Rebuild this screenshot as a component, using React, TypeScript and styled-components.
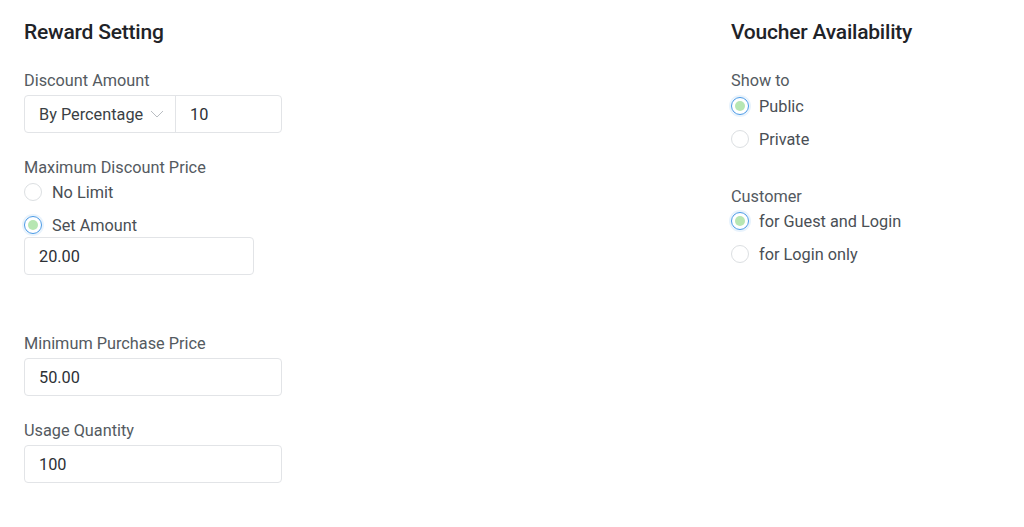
import React from 'react';
import styled, { createGlobalStyle } from 'styled-components';

const GlobalStyle = createGlobalStyle`
  html, body {
    margin: 0;
    padding: 0;
    background: #ffffff;
  }
  body {
    font-family: Roboto, "Liberation Sans", Arial, sans-serif;
  }
`;

const Page = styled.div`
  width: 1024px;
  height: 527px;
  box-sizing: border-box;
  padding: 20px 24px 0;
  display: grid;
  grid-template-columns: 1fr 269px;
  background: #fff;
`;

const Column = styled.div`
  display: flex;
  flex-direction: column;
`;

const Heading = styled.h2`
  margin: 0 0 27px 0;
  font-size: 21px;
  line-height: 24px;
  font-weight: 500;
  color: #1f2328;
  letter-spacing: -0.01em;
`;

const Field = styled.div<{ $gap?: number }>`
  display: flex;
  flex-direction: column;
  margin-bottom: ${(p) => p.$gap ?? 25}px;
`;

const Label = styled.div`
  font-size: 16.3px;
  line-height: 20px;
  color: #545a61;
  margin-bottom: 4px;
`;

const InputGroup = styled.div`
  display: flex;
  width: 258px;
  height: 38px;
  box-sizing: border-box;
  border: 1px solid #e2e4e7;
  border-radius: 4px;
  background: #fff;
`;

const SelectBox = styled.div`
  width: 151px;
  display: flex;
  align-items: center;
  justify-content: space-between;
  box-sizing: border-box;
  padding: 0 11px 0 14px;
  border-right: 1px solid #e2e4e7;
  font-size: 16.3px;
  color: #3a3f45;
`;

const GroupInput = styled.div`
  flex: 1;
  display: flex;
  align-items: center;
  padding-left: 14px;
  font-size: 16.3px;
  color: #2d3136;
`;

const TextInput = styled.div<{ $width?: number }>`
  width: ${(p) => p.$width ?? 258}px;
  height: 38px;
  box-sizing: border-box;
  border: 1px solid #e2e4e7;
  border-radius: 4px;
  display: flex;
  align-items: center;
  padding-left: 14px;
  font-size: 16.3px;
  color: #2d3136;
`;

const RadioList = styled.div<{ $offset?: number }>`
  display: flex;
  flex-direction: column;
  gap: 9px;
  margin-top: ${(p) => p.$offset ?? -1}px;
`;

const RadioRow = styled.div`
  display: flex;
  align-items: center;
  gap: 10px;
  height: 24px;
  font-size: 16.3px;
  color: #4a4f55;
`;

const RadioCircle = styled.span<{ $checked?: boolean }>`
  width: 18px;
  height: 18px;
  box-sizing: border-box;
  border-radius: 50%;
  border: ${(p) => (p.$checked ? '1.5px solid #4a9ae6' : '1px solid #dcdfe2')};
  box-shadow: ${(p) => (p.$checked ? '0 0 0 2px rgba(74, 154, 230, 0.12)' : 'none')};
  display: flex;
  align-items: center;
  justify-content: center;
  flex-shrink: 0;

  &::after {
    content: '';
    width: 10px;
    height: 10px;
    border-radius: 50%;
    background: ${(p) => (p.$checked ? '#b7e6b2' : 'transparent')};
  }
`;

const Chevron = () => (
  <svg width="14" height="8" viewBox="0 0 14 8" fill="none">
    <polyline points="1,1 7,7 13,1" stroke="#b9bdc2" strokeWidth="1" />
  </svg>
);

const Radio: React.FC<{ checked?: boolean; label: string }> = ({ checked, label }) => (
  <RadioRow>
    <RadioCircle $checked={checked} />
    <span>{label}</span>
  </RadioRow>
);

const App: React.FC = () => {
  return (
    <>
      <GlobalStyle />
      <Page>
        <Column>
          <Heading>Reward Setting</Heading>

          <Field>
            <Label>Discount Amount</Label>
            <InputGroup>
              <SelectBox>
                <span>By Percentage</span>
                <Chevron />
              </SelectBox>
              <GroupInput>10</GroupInput>
            </InputGroup>
          </Field>

          <Field $gap={59}>
            <Label>Maximum Discount Price</Label>
            <RadioList $offset={-2}>
              <Radio label="No Limit" />
              <Radio checked label="Set Amount" />
            </RadioList>
            <TextInput $width={230}>20.00</TextInput>
          </Field>

          <Field>
            <Label>Minimum Purchase Price</Label>
            <TextInput>50.00</TextInput>
          </Field>

          <Field>
            <Label>Usage Quantity</Label>
            <TextInput>100</TextInput>
          </Field>
        </Column>

        <Column>
          <Heading>Voucher Availability</Heading>

          <Field $gap={36}>
            <Label>Show to</Label>
            <RadioList>
              <Radio checked label="Public" />
              <Radio label="Private" />
            </RadioList>
          </Field>

          <Field>
            <Label>Customer</Label>
            <RadioList $offset={-2}>
              <Radio checked label="for Guest and Login" />
              <Radio label="for Login only" />
            </RadioList>
          </Field>
        </Column>
      </Page>
    </>
  );
};

export default App;
